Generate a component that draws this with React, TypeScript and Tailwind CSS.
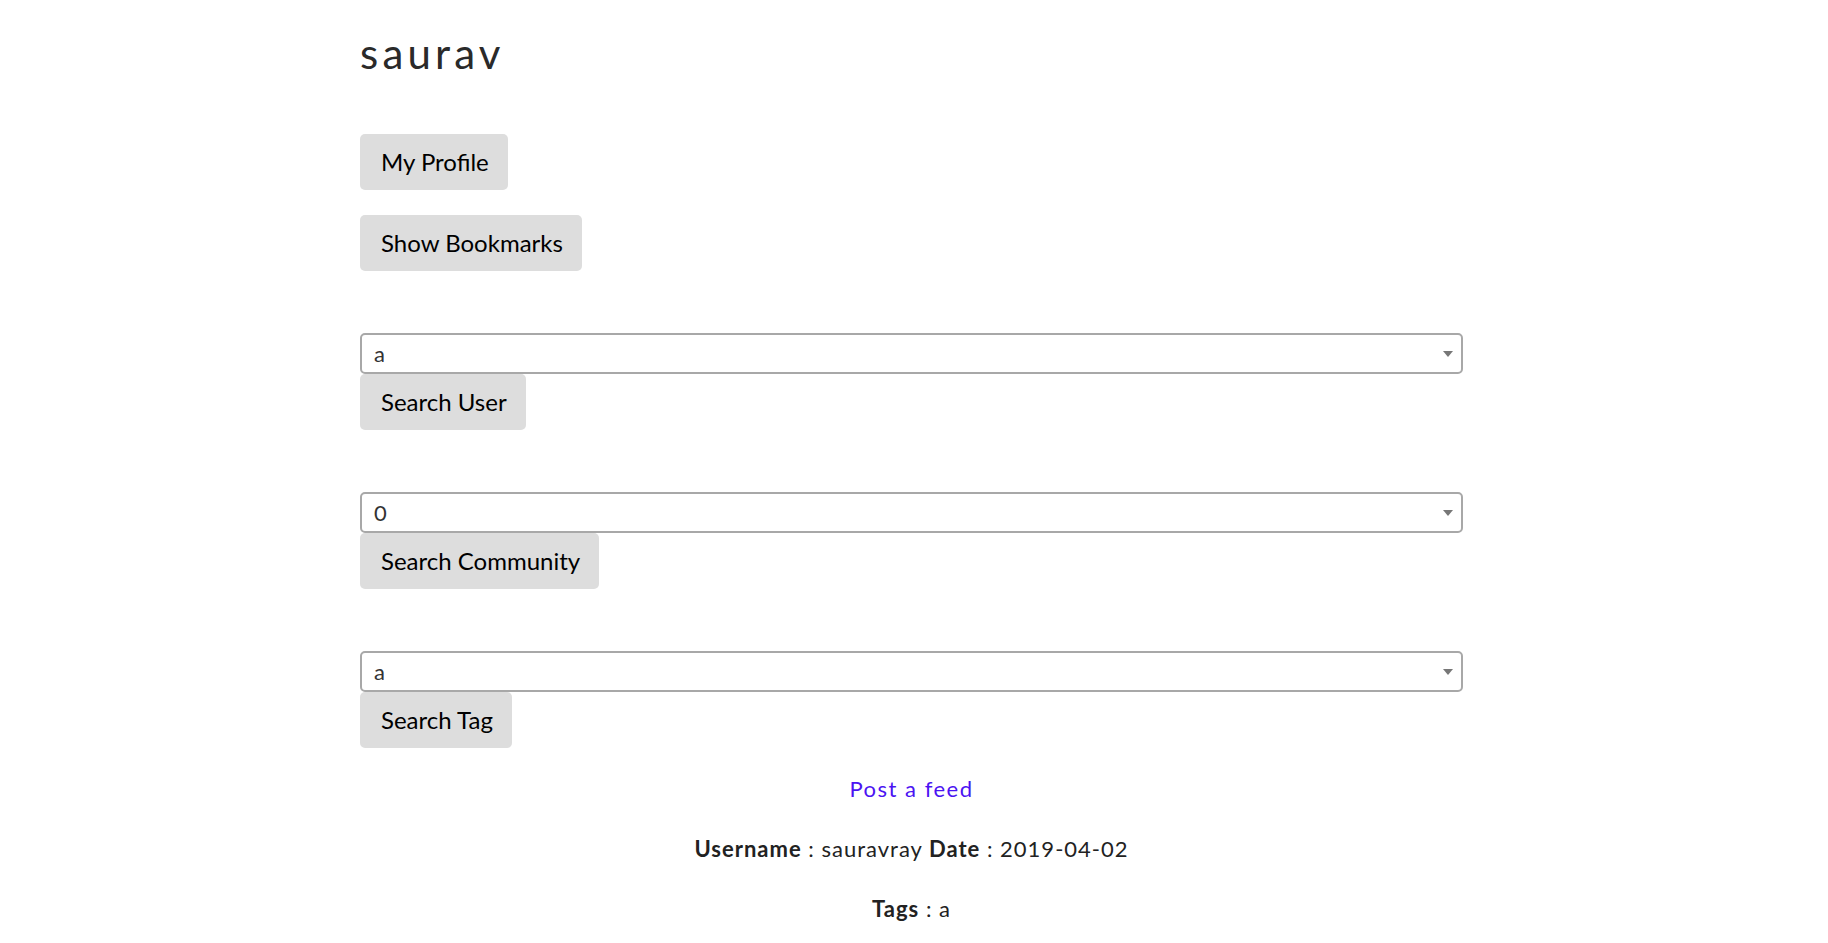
import { useState } from 'react';

type SearchBoxProps = {
  value: string;
  options: string[];
  label: string;
  onChange: (value: string) => void;
};

const font = { fontFamily: 'Lato, "Open Sans", sans-serif' };

const GrayButton: React.FC<{ label: string }> = ({ label }) => (
  <button className="h-[56px] w-max rounded-[5px] bg-[#dddddd] pl-[21px] pr-[19px] text-[24px] leading-[30px] text-black">
    {label}
  </button>
);

const SearchBox: React.FC<SearchBoxProps> = ({ value, options, label, onChange }) => (
  <div className="mt-[62px] flex flex-col">
    <div className="relative h-[41px] w-full">
      <select
        value={value}
        onChange={event => onChange(event.target.value)}
        className="h-full w-full appearance-none rounded-[5px] border-2 border-[#a8a8a8] bg-white pl-[12px] text-[22px] text-[#333333] outline-none"
        style={font}
      >
        {options.map(option => (
          <option key={option} value={option}>
            {option}
          </option>
        ))}
      </select>
      <span className="pointer-events-none absolute right-[10px] top-[18px] h-0 w-0 border-x-[5px] border-t-[6px] border-x-transparent border-t-[#777777]" />
    </div>
    <GrayButton label={label} />
  </div>
);

export default function App() {
  const [user, setUser] = useState('a');
  const [community, setCommunity] = useState('0');
  const [tag, setTag] = useState('a');

  return (
    <div className="min-h-screen bg-white" style={font}>
      <div className="ml-[360px] flex w-[1103px] flex-col pt-[29px]">
        <h1 className="text-[42px] leading-[48px] tracking-[0.1em] text-[#2a2a2a]">
          saurav
        </h1>

        <div className="mt-[57px] flex flex-col gap-[25px]">
          <GrayButton label="My Profile" />
          <GrayButton label="Show Bookmarks" />
        </div>

        <SearchBox
          value={user}
          options={['a', 'sauravray']}
          label="Search User"
          onChange={setUser}
        />
        <SearchBox
          value={community}
          options={['0', '1']}
          label="Search Community"
          onChange={setCommunity}
        />
        <SearchBox
          value={tag}
          options={['a', 'b']}
          label="Search Tag"
          onChange={setTag}
        />

        <a
          href="#"
          className="mt-[24px] self-center text-[22px] leading-[33px] tracking-[1.5px] text-[#4b13f2]"
        >
          Post a feed
        </a>

        <p className="mt-[27px] text-center text-[22px] leading-[33px] tracking-[1px] text-[#222222]">
          <span className="font-bold">Username</span> : sauravray{' '}
          <span className="font-bold">Date</span> : 2019-04-02
        </p>

        <p className="mt-[27px] text-center text-[22px] leading-[33px] tracking-[1px] text-[#222222]">
          <span className="font-bold">Tags</span> : a
        </p>
      </div>
    </div>
  );
}
